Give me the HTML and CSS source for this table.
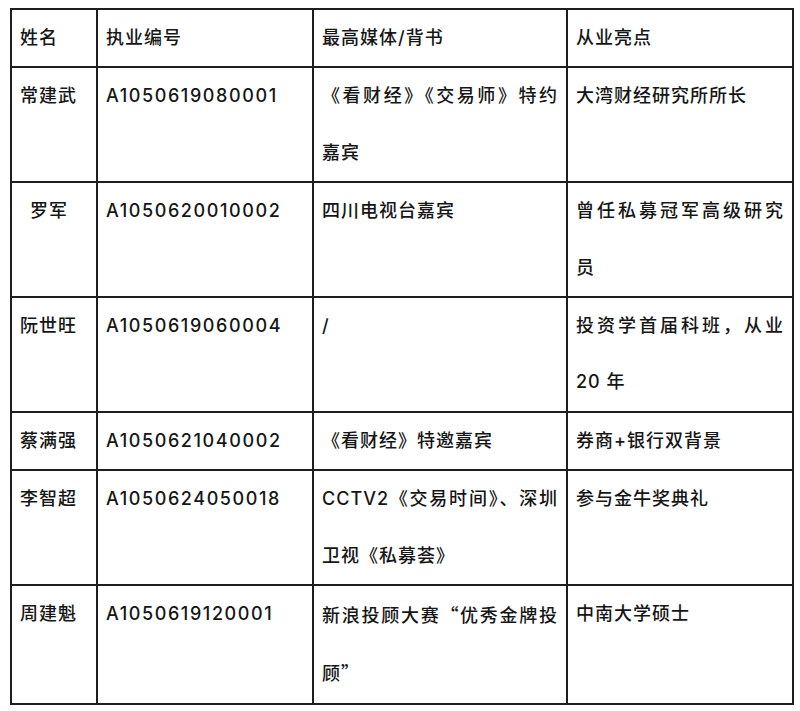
FILE: index.html
```html
<!DOCTYPE html>
<html lang="zh-CN">
<head>
<meta charset="utf-8">
<title>投顾名单</title>
<link rel="stylesheet" href="styles.css">
</head>
<body>
<table class="roster">
  <colgroup>
    <col class="c-name">
    <col class="c-code">
    <col class="c-media">
    <col class="c-high">
  </colgroup>
  <thead>
    <tr><th>姓名</th><th>执业编号</th><th>最高媒体/背书</th><th>从业亮点</th></tr>
  </thead>
  <tbody>
    <tr><td>常建武</td><td class="code">A1050619080001</td><td>《看财经》《交易师》特约嘉宾</td><td>大湾财经研究所所长</td></tr>
    <tr><td class="indent">罗军</td><td class="code">A1050620010002</td><td>四川电视台嘉宾</td><td>曾任私募冠军高级研究员</td></tr>
    <tr><td>阮世旺</td><td class="code">A1050619060004</td><td>/</td><td>投资学首届科班，从业20 年</td></tr>
    <tr><td>蔡满强</td><td class="code">A1050621040002</td><td>《看财经》特邀嘉宾</td><td>券商+银行双背景</td></tr>
    <tr><td>李智超</td><td class="code">A1050624050018</td><td>CCTV2《交易时间》、深圳卫视《私募荟》</td><td>参与金牛奖典礼</td></tr>
    <tr><td>周建魁</td><td class="code">A1050619120001</td><td>新浪投顾大赛<span class="q">“</span>优秀金牌投顾<span class="q">”</span></td><td>中南大学硕士</td></tr>
  </tbody>
</table>
</body>
</html>
```
FILE: styles.css
```css
html, body {
  background: #ffffff;
}
body {
  margin: 0;
  padding: 8px 8px 8px 10px;
  font-family: Inter, "Noto Sans CJK SC", sans-serif;
  font-size: 18px;
  letter-spacing: 1px;
  color: #161616;
}
.roster {
  width: 782px;
  table-layout: fixed;
  border-collapse: collapse;
  border: 2px solid #1e1e1e;
}
.c-name { width: 86px; }
.c-code { width: 216px; }
.c-media { width: 254px; }
.c-high { width: 226px; }
.roster th,
.roster td {
  border: 2px solid #1e1e1e;
  padding: 0 8px;
  line-height: 56.4px;
  font-weight: 500;
  text-align: justify;
  vertical-align: top;
}
.roster td.code {
  letter-spacing: 1.6px;
}
.roster td.indent {
  padding-left: 18px;
}
.q {
  font-family: "Noto Sans CJK SC", sans-serif;
}
```
